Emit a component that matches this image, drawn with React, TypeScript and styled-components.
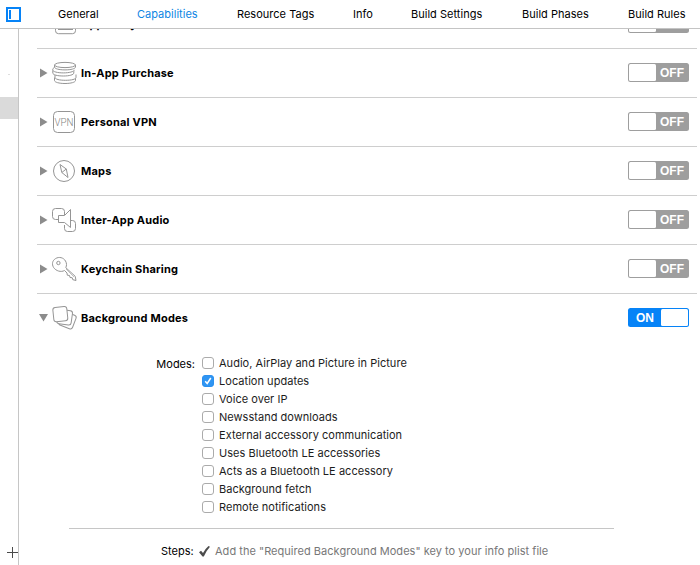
import React from "react";
import styled, { createGlobalStyle } from "styled-components";

const GlobalStyle = createGlobalStyle`
  * { box-sizing: border-box; }
  body {
    margin: 0;
    background: #fff;
    color: #000;
    font: 11px/14px Inter, "Liberation Sans", sans-serif;
    overflow: hidden;
  }
`;

const Window = styled.div`
  width: 700px;
  height: 565px;
  display: flex;
  flex-direction: column;
  overflow: hidden;
`;

const TabBar = styled.nav`
  flex: none;
  height: 29px;
  display: flex;
  align-items: center;
  border-bottom: 1px solid #c4c4c4;
  padding-left: 6px;
`;

const PanelIcon = styled.svg`
  flex: none;
  width: 15px;
  height: 15px;
  margin-right: 37px;
`;

const Tabs = styled.div`
  display: flex;
  gap: 39px;
`;

const Tab = styled.span<{ $active?: boolean; $width: number }>`
  flex: none;
  width: ${(p) => p.$width}px;
  white-space: nowrap;
  letter-spacing: 0.02px;
  color: ${(p) => (p.$active ? "#0d86e3" : "#000")};
`;

const Body = styled.div`
  flex: 1;
  min-height: 0;
  display: flex;
`;

const Sidebar = styled.aside`
  flex: none;
  width: 19px;
  border-right: 1px solid #c6c6c6;
  display: flex;
  flex-direction: column;
`;

const Dash = styled.div`
  width: 2px;
  height: 1px;
  margin: 45px 0 22px 8px;
  background: #dedede;
`;

const Selection = styled.div`
  height: 22px;
  background: #dadada;
`;

const AddIcon = styled.svg`
  width: 11px;
  height: 11px;
  margin: auto 0 7px 7px;
`;

const Content = styled.main`
  flex: 1;
  min-width: 0;
  overflow: hidden;
  padding: 0 3px 0 18px;
`;

const List = styled.div`
  margin-top: -29px;
`;

const Row = styled.div<{ $open?: boolean }>`
  height: 49px;
  display: flex;
  align-items: flex-start;
  padding: 0 8px 0 2px;
  border-bottom: 1px solid ${(p) => (p.$open ? "transparent" : "#cecece")};
`;

const Disclosure = styled.svg`
  flex: none;
  width: 10px;
  height: 10px;
  margin: 19px 3px 0 0;
  fill: #8c8c8c;
`;

const Glyph = styled.svg`
  flex: none;
  width: 26px;
  height: 26px;
  margin: 11px 3px 0 0;
  fill: #fff;
  stroke: #959595;
  stroke-width: 1;
  stroke-linejoin: round;
  overflow: visible;

  text {
    font: 300 11.5px Roboto, sans-serif;
    fill: #858585;
    stroke: none;
  }
`;

const RowTitle = styled.span`
  flex: 1;
  margin-top: 17px;
  font-weight: 700;
  white-space: nowrap;
  letter-spacing: 0.19px;
`;

const Switch = styled.div<{ $on?: boolean }>`
  flex: none;
  width: 61px;
  height: 19px;
  margin-top: 14px;
  padding: 1px;
  display: flex;
  flex-direction: ${(p) => (p.$on ? "row-reverse" : "row")};
  border-radius: 2.5px;
  background: ${(p) => (p.$on ? "#0683f7" : "#9e9e9e")};
`;

const Knob = styled.span`
  width: 27px;
  border-radius: 1.5px;
  background: #fff;
`;

const SwitchLabel = styled.span`
  flex: 1;
  text-align: center;
  font: 700 12px/18px "Liberation Sans", sans-serif;
  color: #fff;
`;

const Modes = styled.section`
  display: grid;
  grid-template-columns: 158px auto;
  column-gap: 7px;
  margin-top: 11px;
`;

const FieldLabel = styled.span`
  text-align: right;
  margin-top: 3px;
`;

const Options = styled.div`
  display: flex;
  flex-direction: column;
`;

const Option = styled.label`
  height: 18px;
  display: flex;
  align-items: center;
  gap: 5px;
  letter-spacing: 0.03px;
  color: #1c1c1c;
  white-space: nowrap;
`;

const Box = styled.span<{ $checked?: boolean }>`
  flex: none;
  width: 12px;
  height: 12px;
  display: flex;
  border-radius: 3px;
  border: 1px solid ${(p) => (p.$checked ? "#2b90f0" : "#ababab")};
  background: ${(p) => (p.$checked ? "#2f95f3" : "#fff")};
`;

const Rule = styled.hr`
  height: 1px;
  margin: 12px 83px 0 32px;
  border: 0;
  background: #c6c6c6;
`;

const Steps = styled.section`
  display: flex;
  align-items: center;
  margin-top: 15px;
  height: 14px;
  padding-left: 124px;
  white-space: nowrap;
`;

const StepCheck = styled.svg`
  flex: none;
  width: 11px;
  height: 11px;
  margin: 0 5px 0 0;
`;

const StepLabel = styled.span`
  width: 38px;
`;

const StepText = styled.span`
  color: #777;
  letter-spacing: 0.03px;
`;

const glyphs: Record<string, React.ReactNode> = {
  pay: (
    <>
      <rect x="3.5" y="1.5" width="20" height="21.2" rx="3" />
      <path d="M6 18.5h15M6 15.5h15" />
    </>
  ),
  coins: (
    <>
      <path d="M2.500 17.500v3c0 1.700 4.500 3 10.500 3s10.500-1.300 10.500-3v-3" />
      <path d="M3 14.500v3c0 1.700 4.500 2.800 10.500 2.800s10.500-1.100 10.500-2.800v-3" />
      <path d="M.8 10.500v2.500c0 1.800 4.500 3 10.500 3s10.500-1.200 10.500-3v-2.500z" />
      <path d="M1.500 8.500v1.500c0 1.700 4.500 2.900 10.500 2.900s10.500-1.200 10.500-2.900v-1.500z" stroke="none" />
      <path d="M2.500 7.500c-1.200 .6-2 1.200-1.700 2.500 0 1.700 4.700 2.900 10.500 2.900s10.700-1.200 11.200-3" />
      <path d="M2.500 5v2c0 1.700 4.500 2.900 10.500 2.900s10.500-1.200 10.500-2.900v-2" />
      <ellipse cx="13" cy="5" rx="10.500" ry="2.600" />
    </>
  ),
  vpn: (
    <>
      <rect x="1.500" y="2.500" width="21" height="21" rx="4" />
      <text x="12" y="17" textAnchor="middle" textLength="19" lengthAdjust="spacingAndGlyphs">VPN</text>
    </>
  ),
  compass: (
    <>
      <circle cx="12" cy="13" r="10.500" />
      <path d="M8 6.500l6.300 4.500 1.700 8.500-6.200-5z" />
      <path d="M9.800 14.500l4.500-3.500" />
    </>
  ),
  audio: (
    <>
      <path d="M6.500 12.500H3.500a3 3 0 0 1-3-3v-5a3 3 0 0 1 3-3h6a3 3 0 0 1 3 3V8" />
      <path d="M12.500 18v3.500a3 3 0 0 0 3 3h5a3 3 0 0 0 3-3v-5a3 3 0 0 0-3-3h-2" />
      <path d="M6.500 8.500h6l6-6v18l-6-5h-6z" />
    </>
  ),
  key: (
    <>
      <path d="M12.500 14.500C9 16.500 4 15 1.600 11.500C-.5 8 .5 4.500 3.500 2.600C7 .4 11.500 1.500 13.500 5C14.800 7.300 14.800 9.500 13.800 11.700L23.200 20.300l.8 4.200-3.200-.8-.6-2-2.200-.2-.5-2-2.200-.3-.3-2.200z" />
      <circle cx="6.400" cy="7" r="1.700" />
      <path d="M14 13l8 8" strokeWidth=".6" />
    </>
  ),
  stack: (
    <>
      <rect x="8.200" y="8" width="14.500" height="14.500" rx="2.500" transform="rotate(21 15.500 15.500)" />
      <rect x="5.400" y="4.900" width="14.500" height="14.500" rx="2.500" transform="rotate(8 12.500 12)" />
      <rect x="1.300" y="2" width="14" height="14.300" rx="2.500" transform="rotate(-6 8 9)" />
    </>
  ),
};

const tabs = [
  { label: "General", width: 40 },
  { label: "Capabilities", width: 61, active: true },
  { label: "Resource Tags", width: 77 },
  { label: "Info", width: 19 },
  { label: "Build Settings", width: 72 },
  { label: "Build Phases", width: 67 },
  { label: "Build Rules", width: 60 },
];

const capabilities = [
  { title: "Apple Pay", glyph: "pay" },
  { title: "In-App Purchase", glyph: "coins" },
  { title: "Personal VPN", glyph: "vpn" },
  { title: "Maps", glyph: "compass" },
  { title: "Inter-App Audio", glyph: "audio" },
  { title: "Keychain Sharing", glyph: "key" },
  { title: "Background Modes", glyph: "stack", on: true },
];

const modes = [
  { label: "Audio, AirPlay and Picture in Picture" },
  { label: "Location updates", checked: true },
  { label: "Voice over IP" },
  { label: "Newsstand downloads" },
  { label: "External accessory communication" },
  { label: "Uses Bluetooth LE accessories" },
  { label: "Acts as a Bluetooth LE accessory" },
  { label: "Background fetch" },
  { label: "Remote notifications" },
];

export default function App() {
  return (
    <Window>
      <GlobalStyle />
      <TabBar>
        <PanelIcon viewBox="0 0 15 15">
          <rect x="1" y="1" width="13" height="13" fill="none" stroke="#0683f7" strokeWidth="2" />
          <rect x="3" y="3" width="2" height="9" fill="#0683f7" />
        </PanelIcon>
        <Tabs>
          {tabs.map((t) => (
            <Tab key={t.label} $active={t.active} $width={t.width}>
              {t.label}
            </Tab>
          ))}
        </Tabs>
      </TabBar>
      <Body>
        <Sidebar>
          <Dash />
          <Selection />
          <AddIcon viewBox="0 0 11 11">
            <path d="M0 5.500h11M5.500 0v11" stroke="#4a4a4a" />
          </AddIcon>
        </Sidebar>
        <Content>
          <List>
            {capabilities.map((c) => (
              <Row key={c.title} $open={c.on}>
                <Disclosure viewBox="0 0 10 10">
                  <path d={c.on ? "M0 1h9L4.500 8.500z" : "M1 .5v9L8.500 5z"} />
                </Disclosure>
                <Glyph viewBox="0 0 26 26">{glyphs[c.glyph]}</Glyph>
                <RowTitle>{c.title}</RowTitle>
                <Switch $on={c.on}>
                  <Knob />
                  <SwitchLabel>{c.on ? "ON" : "OFF"}</SwitchLabel>
                </Switch>
              </Row>
            ))}
          </List>
          <Modes>
            <FieldLabel>Modes:</FieldLabel>
            <Options>
              {modes.map((m) => (
                <Option key={m.label}>
                  <Box $checked={m.checked}>
                    {m.checked && (
                      <svg width="10" height="10" viewBox="0 0 10 10">
                        <path d="M2.200 5.200l2 2.300L7.800 2" fill="none" stroke="#fff" strokeWidth="1.500" />
                      </svg>
                    )}
                  </Box>
                  {m.label}
                </Option>
              ))}
            </Options>
          </Modes>
          <Rule />
          <Steps>
            <StepLabel>Steps:</StepLabel>
            <StepCheck viewBox="0 0 11 11">
              <path d="M0 6.200L2 4.800l2 2.300Q6.500 2.500 9.500 0L11 .8Q7.500 4.500 4.800 10.500H3.500z" fill="#4c4c4c" />
            </StepCheck>
            <StepText>Add the "Required Background Modes" key to your info plist file</StepText>
          </Steps>
        </Content>
      </Body>
    </Window>
  );
}
